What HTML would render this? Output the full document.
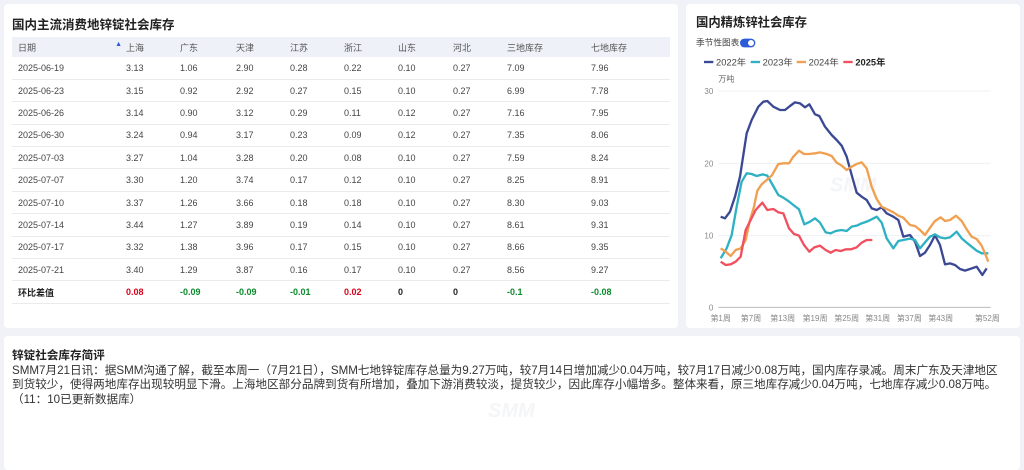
<!DOCTYPE html>
<html><head><meta charset="utf-8"><style>
*{margin:0;padding:0;box-sizing:border-box}
body{width:1024px;height:466px;background:#f0f2f7;font-family:"Liberation Sans","Noto Sans CJK SC",sans-serif;color:#333;position:relative;overflow:hidden}
.p{position:absolute;background:#fff;border-radius:4px}
h3{font-size:12.5px;font-weight:bold;color:#222;position:absolute;left:8px;top:10px}
table{position:absolute;left:8px;top:33px;width:658px;border-collapse:collapse;font-size:9px;color:#444}
th{background:#eef1f8;height:20px;font-weight:normal;text-align:left;color:#555}
td{height:22.4px;border-bottom:1px solid #e8eaee}
th:first-child,td:first-child{padding-left:6px}
.r{color:#d9001b;font-weight:bold}.g{color:#0a8a2a;font-weight:bold}.b{font-weight:bold;color:#222}
.txt{position:absolute;left:8px;top:13px;font-size:11.6px;line-height:14.6px;color:#333;white-space:nowrap}
</style></head><body>
<div class="p" style="left:4px;top:4px;width:674px;height:324px">
<h3>国内主流消费地锌锭社会库存</h3>
<table>
<colgroup><col style="width:114px"><col style="width:54px"><col style="width:56px"><col style="width:54px"><col style="width:54px"><col style="width:54px"><col style="width:55px"><col style="width:54px"><col style="width:84px"><col></colgroup>
<tr><th>日期<span style="float:right;font-size:7px;color:#2b5bd7;padding-right:4px">▲</span></th><th>上海</th><th>广东</th><th>天津</th><th>江苏</th><th>浙江</th><th>山东</th><th>河北</th><th>三地库存</th><th>七地库存</th></tr>
<tr><td>2025-06-19</td><td>3.13</td><td>1.06</td><td>2.90</td><td>0.28</td><td>0.22</td><td>0.10</td><td>0.27</td><td>7.09</td><td>7.96</td></tr>
<tr><td>2025-06-23</td><td>3.15</td><td>0.92</td><td>2.92</td><td>0.27</td><td>0.15</td><td>0.10</td><td>0.27</td><td>6.99</td><td>7.78</td></tr>
<tr><td>2025-06-26</td><td>3.14</td><td>0.90</td><td>3.12</td><td>0.29</td><td>0.11</td><td>0.12</td><td>0.27</td><td>7.16</td><td>7.95</td></tr>
<tr><td>2025-06-30</td><td>3.24</td><td>0.94</td><td>3.17</td><td>0.23</td><td>0.09</td><td>0.12</td><td>0.27</td><td>7.35</td><td>8.06</td></tr>
<tr><td>2025-07-03</td><td>3.27</td><td>1.04</td><td>3.28</td><td>0.20</td><td>0.08</td><td>0.10</td><td>0.27</td><td>7.59</td><td>8.24</td></tr>
<tr><td>2025-07-07</td><td>3.30</td><td>1.20</td><td>3.74</td><td>0.17</td><td>0.12</td><td>0.10</td><td>0.27</td><td>8.25</td><td>8.91</td></tr>
<tr><td>2025-07-10</td><td>3.37</td><td>1.26</td><td>3.66</td><td>0.18</td><td>0.18</td><td>0.10</td><td>0.27</td><td>8.30</td><td>9.03</td></tr>
<tr><td>2025-07-14</td><td>3.44</td><td>1.27</td><td>3.89</td><td>0.19</td><td>0.14</td><td>0.10</td><td>0.27</td><td>8.61</td><td>9.31</td></tr>
<tr><td>2025-07-17</td><td>3.32</td><td>1.38</td><td>3.96</td><td>0.17</td><td>0.15</td><td>0.10</td><td>0.27</td><td>8.66</td><td>9.35</td></tr>
<tr><td>2025-07-21</td><td>3.40</td><td>1.29</td><td>3.87</td><td>0.16</td><td>0.17</td><td>0.10</td><td>0.27</td><td>8.56</td><td>9.27</td></tr>
<tr><td class="b">环比差值</td><td class="r">0.08</td><td class="g">-0.09</td><td class="g">-0.09</td><td class="g">-0.01</td><td class="r">0.02</td><td class="b">0</td><td class="b">0</td><td class="g">-0.1</td><td class="g">-0.08</td></tr>
</table>
</div>
<div class="p" style="left:686px;top:4px;width:334px;height:324px"></div>
<svg style="position:absolute;left:680px;top:0" width="344" height="330" viewBox="0 0 1032 990" font-family="Liberation Sans,Noto Sans CJK SC,sans-serif">
<text x="48" y="80" font-size="37" font-weight="bold" fill="#222">国内精炼锌社会库存</text>
<text x="48" y="137" font-size="26" fill="#444">季节性图表</text>
<rect x="180" y="116" width="46" height="26" rx="13" fill="#2b5bd7"/><circle cx="213" cy="129" r="9" fill="#fff"/>
<g font-size="28" fill="#444">
<line x1="72" y1="186" x2="100" y2="186" stroke="#3b4994" stroke-width="7"/><text x="108" y="196">2022年</text>
<line x1="212" y1="186" x2="240" y2="186" stroke="#2fb1c4" stroke-width="7"/><text x="248" y="196">2023年</text>
<line x1="350" y1="186" x2="378" y2="186" stroke="#f0a050" stroke-width="7"/><text x="386" y="196">2024年</text>
<line x1="490" y1="186" x2="518" y2="186" stroke="#f05060" stroke-width="7"/><text x="526" y="196" font-weight="bold" fill="#222">2025年</text>
</g>
<text x="115" y="245" font-size="24" fill="#666">万吨</text>
<g stroke="#eef0f5" stroke-width="3"><line x1="115" y1="273" x2="932" y2="273"/><line x1="115" y1="490" x2="932" y2="490"/><line x1="115" y1="707" x2="932" y2="707"/></g>
<line x1="115" y1="922" x2="932" y2="922" stroke="#bbb" stroke-width="3"/>
<g font-size="24" fill="#888" text-anchor="end"><text x="100" y="282">30</text><text x="100" y="499">20</text><text x="100" y="716">10</text><text x="100" y="931">0</text></g>
<g font-size="24" fill="#888" text-anchor="middle"><text x="122" y="963">第1周</text><text x="213" y="963">第7周</text><text x="308" y="963">第13周</text><text x="405" y="963">第19周</text><text x="500" y="963">第25周</text><text x="593" y="963">第31周</text><text x="688" y="963">第37周</text><text x="782" y="963">第43周</text><text x="922" y="963">第52周</text></g>
<text x="450" y="575" font-size="60" font-weight="bold" font-style="italic" fill="#f4f5f7">SMM</text>
<g fill="none" stroke-width="7" stroke-linejoin="round">
<polyline stroke="#3b4994" points="122,650 135,655 150,635 165,590 180,530 200,400 215,360 235,320 250,305 262,303 280,320 300,330 315,330 330,318 345,307 360,310 375,322 388,313 405,343 418,348 435,380 455,405 470,420 485,437 500,470 515,525 530,578 545,590 560,600 575,625 590,630 605,622 620,640 640,650 655,660 670,710 690,705 705,725 720,768 735,758 750,735 765,706 780,735 795,793 810,790 825,795 840,807 855,812 870,807 890,800 907,825 920,805"/>
<polyline stroke="#2fb1c4" points="122,775 140,745 155,705 170,620 185,545 200,520 215,522 230,528 248,523 262,527 278,555 295,585 310,593 325,603 340,615 357,628 373,673 390,665 405,655 420,668 437,697 452,700 467,693 485,690 500,693 515,680 530,677 545,670 560,665 575,658 590,650 605,668 620,715 640,745 655,723 670,720 690,716 705,720 720,745 735,727 750,710 765,703 780,712 795,715 810,712 830,695 845,715 860,728 875,740 890,752 905,760 925,760"/>
<polyline stroke="#f0a050" points="122,745 137,755 152,768 167,750 182,745 197,720 210,660 222,620 232,572 245,553 260,540 275,527 295,492 310,490 327,490 340,470 357,452 372,462 387,462 405,460 420,457 440,462 455,468 470,488 485,497 500,510 515,500 530,492 545,487 560,505 575,560 590,597 605,620 620,627 640,637 655,647 670,653 690,675 705,678 720,690 735,705 750,683 765,663 782,652 795,663 810,660 828,647 845,663 860,688 875,710 890,717 905,737 915,760 925,785"/>
<polyline stroke="#f05060" points="122,785 137,795 152,793 167,785 182,770 197,690 212,660 227,630 247,608 262,630 280,627 295,637 310,640 327,685 342,702 357,707 372,735 388,755 403,742 420,737 437,750 452,758 467,750 482,753 497,748 512,748 530,742 545,728 560,720 577,720"/>
</g>
</svg>
<div class="p" style="left:4px;top:336px;width:1016px;height:134px">
<div class="txt"><b style="color:#222">锌锭社会库存简评</b><br>SMM7月21日讯：据SMM沟通了解，截至本周一（7月21日），SMM七地锌锭库存总量为9.27万吨，较7月14日增加减少0.04万吨，较7月17日减少0.08万吨，国内库存录减。周末广东及天津地区<br>到货较少，使得两地库存出现较明显下滑。上海地区部分品牌到货有所增加，叠加下游消费较淡，提货较少，因此库存小幅增多。整体来看，原三地库存减少0.04万吨，七地库存减少0.08万吨。<br>（11：10已更新数据库）</div>
<div style="position:absolute;left:484px;top:64px;font-size:20px;font-weight:bold;font-style:italic;color:#f4f5f7">SMM</div>
</div>
</body></html>
